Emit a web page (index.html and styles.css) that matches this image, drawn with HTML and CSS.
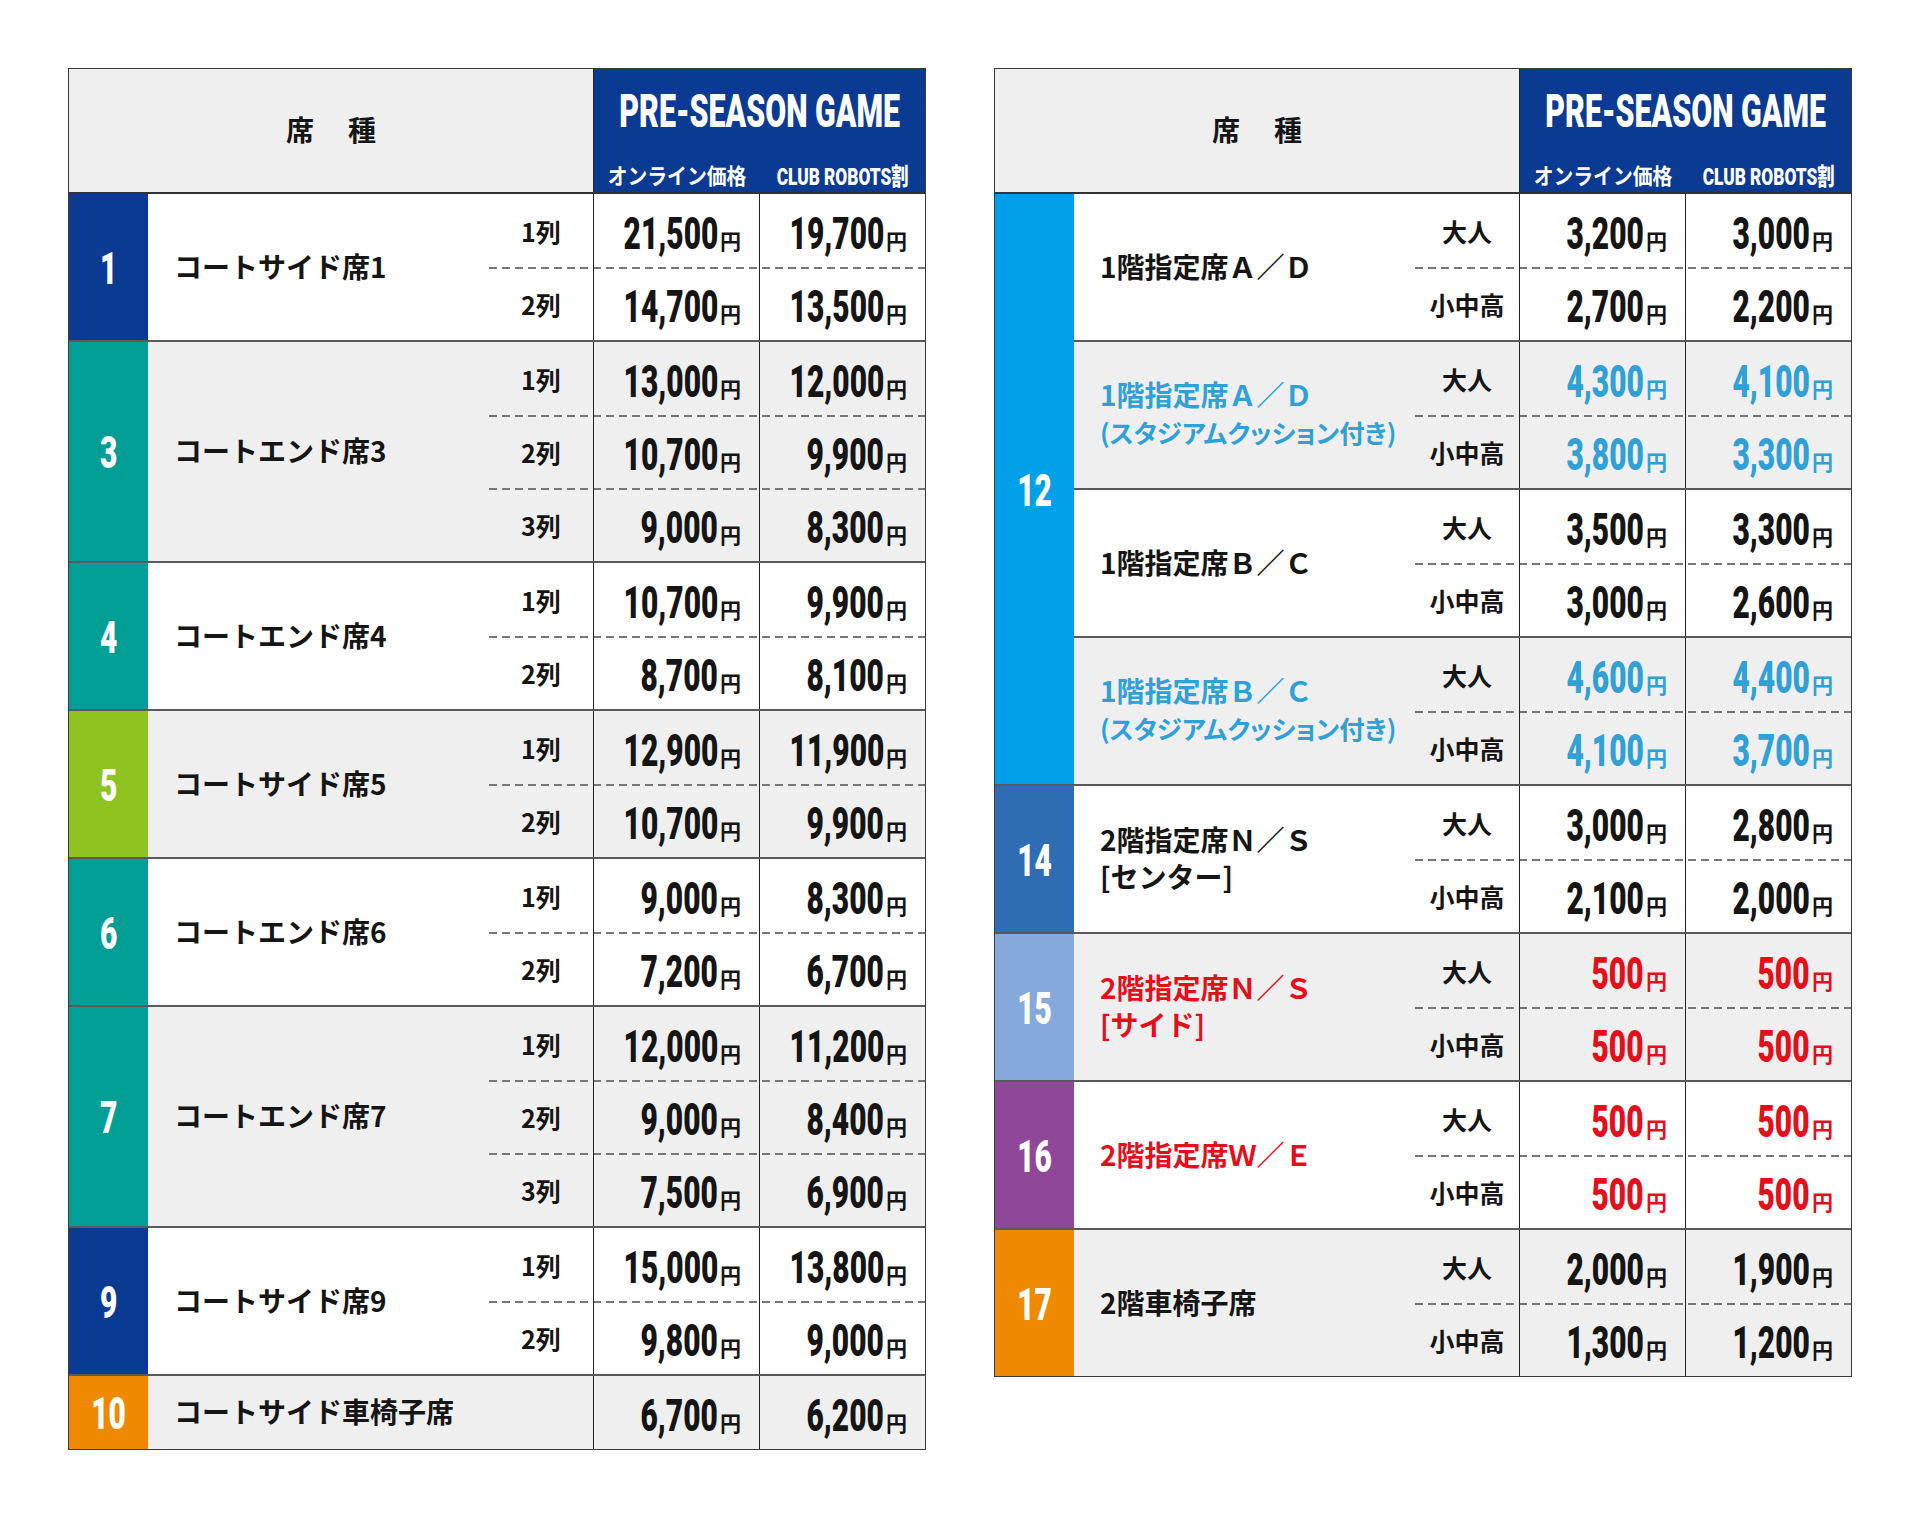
FILE: index.html
```html
<!DOCTYPE html>
<html lang="ja">
<head>
<meta charset="utf-8">
<title>PRE-SEASON GAME 料金表</title>
<link rel="stylesheet" href="styles.css">
</head>
<body>
<main class="page">

  <section class="tbl">
    <div class="head">
      <div class="head-seat"><span>席</span><span>種</span></div>
      <div class="head-game">
        <div class="game-title"><span>PRE-SEASON GAME</span></div>
        <div class="game-subs">
          <div class="gs"><span class="gs-jp">オンライン価格</span></div>
          <div class="gs"><span class="gs-en">CLUB ROBOTS割</span></div>
        </div>
      </div>
    </div>

    <div class="group">
      <div class="no c-navy"><span>1</span></div>
      <div class="subs">
        <div class="sub">
          <div class="name">コートサイド席1</div>
          <div class="rows">
            <div class="row"><div class="lbl">1列</div><div class="price"><span class="amt"><b>21,500</b><i>円</i></span></div><div class="price"><span class="amt"><b>19,700</b><i>円</i></span></div></div>
            <div class="row"><div class="lbl">2列</div><div class="price"><span class="amt"><b>14,700</b><i>円</i></span></div><div class="price"><span class="amt"><b>13,500</b><i>円</i></span></div></div>
          </div>
        </div>
      </div>
    </div>

    <div class="group">
      <div class="no c-teal"><span>3</span></div>
      <div class="subs">
        <div class="sub gray">
          <div class="name">コートエンド席3</div>
          <div class="rows">
            <div class="row"><div class="lbl">1列</div><div class="price"><span class="amt"><b>13,000</b><i>円</i></span></div><div class="price"><span class="amt"><b>12,000</b><i>円</i></span></div></div>
            <div class="row"><div class="lbl">2列</div><div class="price"><span class="amt"><b>10,700</b><i>円</i></span></div><div class="price"><span class="amt"><b>9,900</b><i>円</i></span></div></div>
            <div class="row"><div class="lbl">3列</div><div class="price"><span class="amt"><b>9,000</b><i>円</i></span></div><div class="price"><span class="amt"><b>8,300</b><i>円</i></span></div></div>
          </div>
        </div>
      </div>
    </div>

    <div class="group">
      <div class="no c-teal"><span>4</span></div>
      <div class="subs">
        <div class="sub">
          <div class="name">コートエンド席4</div>
          <div class="rows">
            <div class="row"><div class="lbl">1列</div><div class="price"><span class="amt"><b>10,700</b><i>円</i></span></div><div class="price"><span class="amt"><b>9,900</b><i>円</i></span></div></div>
            <div class="row"><div class="lbl">2列</div><div class="price"><span class="amt"><b>8,700</b><i>円</i></span></div><div class="price"><span class="amt"><b>8,100</b><i>円</i></span></div></div>
          </div>
        </div>
      </div>
    </div>

    <div class="group">
      <div class="no c-lime"><span>5</span></div>
      <div class="subs">
        <div class="sub gray">
          <div class="name">コートサイド席5</div>
          <div class="rows">
            <div class="row"><div class="lbl">1列</div><div class="price"><span class="amt"><b>12,900</b><i>円</i></span></div><div class="price"><span class="amt"><b>11,900</b><i>円</i></span></div></div>
            <div class="row"><div class="lbl">2列</div><div class="price"><span class="amt"><b>10,700</b><i>円</i></span></div><div class="price"><span class="amt"><b>9,900</b><i>円</i></span></div></div>
          </div>
        </div>
      </div>
    </div>

    <div class="group">
      <div class="no c-teal"><span>6</span></div>
      <div class="subs">
        <div class="sub">
          <div class="name">コートエンド席6</div>
          <div class="rows">
            <div class="row"><div class="lbl">1列</div><div class="price"><span class="amt"><b>9,000</b><i>円</i></span></div><div class="price"><span class="amt"><b>8,300</b><i>円</i></span></div></div>
            <div class="row"><div class="lbl">2列</div><div class="price"><span class="amt"><b>7,200</b><i>円</i></span></div><div class="price"><span class="amt"><b>6,700</b><i>円</i></span></div></div>
          </div>
        </div>
      </div>
    </div>

    <div class="group">
      <div class="no c-teal"><span>7</span></div>
      <div class="subs">
        <div class="sub gray">
          <div class="name">コートエンド席7</div>
          <div class="rows">
            <div class="row"><div class="lbl">1列</div><div class="price"><span class="amt"><b>12,000</b><i>円</i></span></div><div class="price"><span class="amt"><b>11,200</b><i>円</i></span></div></div>
            <div class="row"><div class="lbl">2列</div><div class="price"><span class="amt"><b>9,000</b><i>円</i></span></div><div class="price"><span class="amt"><b>8,400</b><i>円</i></span></div></div>
            <div class="row"><div class="lbl">3列</div><div class="price"><span class="amt"><b>7,500</b><i>円</i></span></div><div class="price"><span class="amt"><b>6,900</b><i>円</i></span></div></div>
          </div>
        </div>
      </div>
    </div>

    <div class="group">
      <div class="no c-navy"><span>9</span></div>
      <div class="subs">
        <div class="sub">
          <div class="name">コートサイド席9</div>
          <div class="rows">
            <div class="row"><div class="lbl">1列</div><div class="price"><span class="amt"><b>15,000</b><i>円</i></span></div><div class="price"><span class="amt"><b>13,800</b><i>円</i></span></div></div>
            <div class="row"><div class="lbl">2列</div><div class="price"><span class="amt"><b>9,800</b><i>円</i></span></div><div class="price"><span class="amt"><b>9,000</b><i>円</i></span></div></div>
          </div>
        </div>
      </div>
    </div>

    <div class="group">
      <div class="no c-orange"><span>10</span></div>
      <div class="subs">
        <div class="sub gray">
          <div class="name">コートサイド車椅子席</div>
          <div class="rows">
            <div class="row"><div class="lbl"></div><div class="price"><span class="amt"><b>6,700</b><i>円</i></span></div><div class="price"><span class="amt"><b>6,200</b><i>円</i></span></div></div>
          </div>
        </div>
      </div>
    </div>
  </section>

  <section class="tbl">
    <div class="head">
      <div class="head-seat"><span>席</span><span>種</span></div>
      <div class="head-game">
        <div class="game-title"><span>PRE-SEASON GAME</span></div>
        <div class="game-subs">
          <div class="gs"><span class="gs-jp">オンライン価格</span></div>
          <div class="gs"><span class="gs-en">CLUB ROBOTS割</span></div>
        </div>
      </div>
    </div>

    <div class="group">
      <div class="no c-sky"><span>12</span></div>
      <div class="subs">
        <div class="sub">
          <div class="name">1階指定席Ａ／Ｄ</div>
          <div class="rows">
            <div class="row"><div class="lbl">大人</div><div class="price"><span class="amt"><b>3,200</b><i>円</i></span></div><div class="price"><span class="amt"><b>3,000</b><i>円</i></span></div></div>
            <div class="row"><div class="lbl">小中高</div><div class="price"><span class="amt"><b>2,700</b><i>円</i></span></div><div class="price"><span class="amt"><b>2,200</b><i>円</i></span></div></div>
          </div>
        </div>
        <div class="sub gray t-blue">
          <div class="name name-cushion">1階指定席Ａ／Ｄ<span class="note">(スタジアムクッション付き)</span></div>
          <div class="rows">
            <div class="row"><div class="lbl">大人</div><div class="price"><span class="amt"><b>4,300</b><i>円</i></span></div><div class="price"><span class="amt"><b>4,100</b><i>円</i></span></div></div>
            <div class="row"><div class="lbl">小中高</div><div class="price"><span class="amt"><b>3,800</b><i>円</i></span></div><div class="price"><span class="amt"><b>3,300</b><i>円</i></span></div></div>
          </div>
        </div>
        <div class="sub">
          <div class="name">1階指定席Ｂ／Ｃ</div>
          <div class="rows">
            <div class="row"><div class="lbl">大人</div><div class="price"><span class="amt"><b>3,500</b><i>円</i></span></div><div class="price"><span class="amt"><b>3,300</b><i>円</i></span></div></div>
            <div class="row"><div class="lbl">小中高</div><div class="price"><span class="amt"><b>3,000</b><i>円</i></span></div><div class="price"><span class="amt"><b>2,600</b><i>円</i></span></div></div>
          </div>
        </div>
        <div class="sub gray t-blue">
          <div class="name name-cushion">1階指定席Ｂ／Ｃ<span class="note">(スタジアムクッション付き)</span></div>
          <div class="rows">
            <div class="row"><div class="lbl">大人</div><div class="price"><span class="amt"><b>4,600</b><i>円</i></span></div><div class="price"><span class="amt"><b>4,400</b><i>円</i></span></div></div>
            <div class="row"><div class="lbl">小中高</div><div class="price"><span class="amt"><b>4,100</b><i>円</i></span></div><div class="price"><span class="amt"><b>3,700</b><i>円</i></span></div></div>
          </div>
        </div>
      </div>
    </div>

    <div class="group">
      <div class="no c-mid"><span>14</span></div>
      <div class="subs">
        <div class="sub">
          <div class="name">2階指定席Ｎ／Ｓ<span>[センター]</span></div>
          <div class="rows">
            <div class="row"><div class="lbl">大人</div><div class="price"><span class="amt"><b>3,000</b><i>円</i></span></div><div class="price"><span class="amt"><b>2,800</b><i>円</i></span></div></div>
            <div class="row"><div class="lbl">小中高</div><div class="price"><span class="amt"><b>2,100</b><i>円</i></span></div><div class="price"><span class="amt"><b>2,000</b><i>円</i></span></div></div>
          </div>
        </div>
      </div>
    </div>

    <div class="group">
      <div class="no c-light"><span>15</span></div>
      <div class="subs">
        <div class="sub gray t-red">
          <div class="name">2階指定席Ｎ／Ｓ<span>[サイド]</span></div>
          <div class="rows">
            <div class="row"><div class="lbl">大人</div><div class="price"><span class="amt"><b>500</b><i>円</i></span></div><div class="price"><span class="amt"><b>500</b><i>円</i></span></div></div>
            <div class="row"><div class="lbl">小中高</div><div class="price"><span class="amt"><b>500</b><i>円</i></span></div><div class="price"><span class="amt"><b>500</b><i>円</i></span></div></div>
          </div>
        </div>
      </div>
    </div>

    <div class="group">
      <div class="no c-purple"><span>16</span></div>
      <div class="subs">
        <div class="sub t-red">
          <div class="name">2階指定席Ｗ／Ｅ</div>
          <div class="rows">
            <div class="row"><div class="lbl">大人</div><div class="price"><span class="amt"><b>500</b><i>円</i></span></div><div class="price"><span class="amt"><b>500</b><i>円</i></span></div></div>
            <div class="row"><div class="lbl">小中高</div><div class="price"><span class="amt"><b>500</b><i>円</i></span></div><div class="price"><span class="amt"><b>500</b><i>円</i></span></div></div>
          </div>
        </div>
      </div>
    </div>

    <div class="group">
      <div class="no c-orange"><span>17</span></div>
      <div class="subs">
        <div class="sub gray">
          <div class="name">2階車椅子席</div>
          <div class="rows">
            <div class="row"><div class="lbl">大人</div><div class="price"><span class="amt"><b>2,000</b><i>円</i></span></div><div class="price"><span class="amt"><b>1,900</b><i>円</i></span></div></div>
            <div class="row"><div class="lbl">小中高</div><div class="price"><span class="amt"><b>1,300</b><i>円</i></span></div><div class="price"><span class="amt"><b>1,200</b><i>円</i></span></div></div>
          </div>
        </div>
      </div>
    </div>
  </section>

</main>
</body>
</html>
```

FILE: styles.css
```css
* {
  box-sizing: border-box;
  margin: 0;
  padding: 0;
}

html, body {
  background: #ffffff;
}

body {
  font-family: "Noto Sans CJK JP", "Noto Sans", sans-serif;
  color: #151515;
}

.page {
  display: flex;
  align-items: flex-start;
  gap: 68px;
  padding: 68px 0 0 68px;
}

.tbl {
  width: 858px;
  border: 1px solid #3a3a3a;
  display: flex;
  flex-direction: column;
}

/* header */
.head {
  display: flex;
  height: 125px;
  border-bottom: 2px solid #333;
}

.head-seat {
  flex: 1;
  min-width: 0;
  background: #efefef;
  display: flex;
  align-items: center;
  justify-content: center;
  gap: 34px;
  font-size: 28px;
  font-weight: 700;
  padding-bottom: 3px;
}

.head-game {
  width: 332px;
  flex: none;
  min-width: 0;
  background: #0b3a92;
  border-left: 1px solid #222;
  color: #fff;
  display: flex;
  flex-direction: column;
  justify-content: space-between;
}

.game-title {
  padding-top: 19px;
  display: flex;
  justify-content: center;
  line-height: 46px;
  white-space: nowrap;
  min-width: 0;
}

.game-title span {
  display: inline-block;
  flex: none;
  font-family: Roboto, "Liberation Sans", sans-serif;
  font-weight: 900;
  font-size: 46px;
  transform: scaleX(0.66);
}

.game-subs {
  display: flex;
  height: 36px;
}

.gs {
  flex: 1 1 0;
  min-width: 0;
  display: flex;
  align-items: center;
  justify-content: center;
  white-space: nowrap;
}

.gs-jp {
  display: inline-block;
  flex: none;
  font-size: 22px;
  font-weight: 700;
  transform: scaleX(0.9);
}

.gs-en {
  display: inline-block;
  flex: none;
  font-family: Roboto, "Liberation Sans", "Noto Sans CJK JP", sans-serif;
  font-size: 24px;
  font-weight: 900;
  transform: scaleX(0.72);
}

/* body */
.group {
  display: flex;
  border-top: 2px solid #5a5a5a;
}

.head + .group {
  border-top: 0;
}

.no {
  width: 79px;
  flex: none;
  display: flex;
  align-items: center;
  justify-content: center;
  color: #fff;
  font-family: Roboto, "Liberation Sans", sans-serif;
  font-weight: 900;
  font-size: 44px;
  line-height: 44px;
  padding-top: 3px;
}

.no span {
  display: inline-block;
  transform: scaleX(0.68);
}

.c-navy { background: #0b3a92; }
.c-teal { background: #009e94; }
.c-lime { background: #8fc31f; }
.c-orange { background: #ee8900; }
.c-sky { background: #00a0e8; }
.c-mid { background: #2e6cb4; }
.c-light { background: #85a9db; }
.c-purple { background: #8e4799; }

.subs {
  flex: 1;
  min-width: 0;
  display: flex;
  flex-direction: column;
}

.sub {
  display: flex;
}

.sub + .sub {
  border-top: 2px solid #5a5a5a;
}

.sub.gray {
  background: #efefef;
}

.t-blue { color: #2fa1d6; }
.t-red { color: #e50f1c; }

.name {
  flex: 1;
  min-width: 0;
  display: flex;
  flex-direction: column;
  justify-content: center;
  padding: 0 0 2px 26px;
  font-size: 28px;
  font-weight: 700;
  line-height: 37px;
  white-space: nowrap;
}

.name-cushion {
  line-height: 38px;
  padding-bottom: 5px;
}

.note {
  font-size: 25.5px;
  font-feature-settings: "palt" 1;
}

.rows {
  width: 436px;
  flex: none;
  display: flex;
  flex-direction: column;
}

.row {
  display: flex;
  height: 73px;
}

.row + .row {
  background-image: linear-gradient(to right, #777 8px, transparent 8px);
  background-size: 13px 2px;
  background-repeat: repeat-x;
  background-position: 0 0;
}

.lbl {
  width: 104px;
  flex: none;
  display: flex;
  align-items: center;
  justify-content: center;
  font-size: 25px;
  font-weight: 700;
  color: #151515;
}

.price {
  width: 166px;
  flex: none;
  border-left: 1px solid #222;
  display: flex;
  align-items: center;
  justify-content: flex-end;
  padding: 6px 18px 0 0;
}

.amt {
  display: flex;
  align-items: baseline;
}

.amt b {
  display: inline-block;
  font-family: Roboto, "Liberation Sans", sans-serif;
  font-weight: 900;
  font-size: 44px;
  line-height: 44px;
  transform: scaleX(0.68);
  transform-origin: 100% 50%;
}

.amt i {
  font-style: normal;
  font-weight: 700;
  font-size: 21px;
  margin-left: 2px;
}
```
